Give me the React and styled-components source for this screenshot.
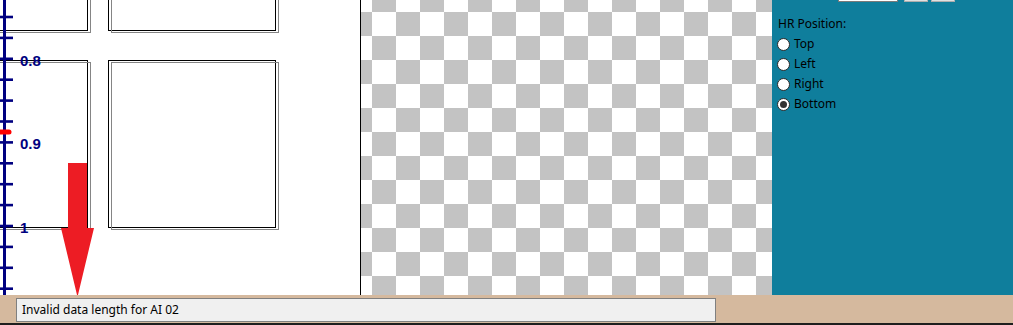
import React from "react";
import styled, { createGlobalStyle } from "styled-components";

const GlobalStyle = createGlobalStyle`
  html, body {
    margin: 0;
    padding: 0;
    overflow: hidden;
  }
  body {
    font-family: "Noto Sans", "Liberation Sans", sans-serif;
  }
`;

const Window = styled.div`
  width: 1013px;
  height: 325px;
  display: flex;
  flex-direction: column;
  overflow: hidden;
`;

const Workspace = styled.div`
  height: 295px;
  display: flex;
`;

const Preview = styled.div`
  width: 360px;
  flex: none;
  background: #ffffff;
  border-right: 1px solid #000000;
  position: relative;
  overflow: hidden;
`;

const LabelGrid = styled.div`
  display: grid;
  grid-template-columns: repeat(2, 168px);
  grid-auto-rows: 168px;
  gap: 29px 20px;
  margin: -137px 0 0 -80px;
`;

const Label = styled.div`
  box-sizing: border-box;
  border: 1px solid #000000;
  position: relative;

  &::after {
    content: "";
    position: absolute;
    box-sizing: border-box;
    top: 1px;
    left: 2px;
    width: 168px;
    height: 168px;
    border: 1px solid #858585;
  }
`;

const Overlay = styled.svg`
  position: absolute;
  top: 0;
  left: 0;
  overflow: visible;
`;

const Checker = styled.div`
  flex: 1;
  background: repeating-conic-gradient(#c3c3c3 0 25%, #ffffff 0 50%);
  background-size: 48px 48px;
  background-position: -13px -12px;
`;

const Sidebar = styled.div`
  width: 241px;
  flex: none;
  background: #0f7e9c;
  padding-left: 6px;
  box-sizing: border-box;
  display: flex;
  flex-direction: column;
  font-size: 12px;
  color: #000000;
`;

const ControlRow = styled.div`
  display: flex;
  align-items: flex-end;
  height: 22px;
  margin-top: -20px;
  padding-left: 60px;
`;

const Field = styled.div`
  width: 60px;
  height: 22px;
  box-sizing: border-box;
  background: #ffffff;
  border: 1px solid #7a7a7a;
  margin-right: ${(p) => p.$gap}px;
`;

const SmallButton = styled.div`
  width: 24px;
  height: 22px;
  box-sizing: border-box;
  background: #e1e1e1;
  border: 1px solid #adadad;
  margin-right: 3px;
`;

const GroupTitle = styled.div`
  margin-top: 14px;
  line-height: 16px;
  height: 16px;
  padding-bottom: 2px;
`;

const RadioRow = styled.label`
  display: flex;
  align-items: center;
  height: 20px;
  gap: 4px;
  line-height: 16px;
`;

const RadioDot = styled.span`
  width: 13px;
  height: 13px;
  box-sizing: border-box;
  border-radius: 50%;
  border: 1px solid #2b2b2b;
  background: #ffffff;
  display: flex;
  align-items: center;
  justify-content: center;
  margin-left: -1px;

  &::after {
    content: "";
    width: 7px;
    height: 7px;
    border-radius: 50%;
    background: ${(p) => (p.$checked ? "#333333" : "transparent")};
  }
`;

const StatusStrip = styled.div`
  height: 28px;
  background: #d5b99e;
  padding: 3px 0 0 16px;
  box-sizing: border-box;
`;

const StatusBox = styled.div`
  width: 700px;
  height: 24px;
  box-sizing: border-box;
  background: #f0f0f0;
  border: 1px solid #808080;
  padding-left: 5px;
  font-size: 12px;
  line-height: 22px;
  color: #000000;
`;

const BottomEdge = styled.div`
  height: 2px;
  background: #1e1e1e;
`;

const ticks = Array.from({ length: 14 }, (_, i) => 17 + i * 20.9);
const marks = [
  { y: 60, text: "0.8" },
  { y: 143, text: "0.9" },
  { y: 227, text: "1" },
];
const positions = ["Top", "Left", "Right", "Bottom"];

function Ruler() {
  return (
    <Overlay width="60" height="295">
      <rect x="3" y="0" width="3" height="295" fill="#000080" />
      {ticks.map((y) => (
        <rect key={y} x="0" y={y - 1.3} width="13" height="2.6" fill="#000080" />
      ))}
      <path d="M0 129.5 H9 A2.5 2.5 0 0 1 9 134.5 H0 Z" fill="#ff0000" />
      {marks.map((m) => (
        <text
          key={m.text}
          x="20"
          y={m.y + 5.5}
          fill="#000080"
          fontFamily="Liberation Sans, Arial, sans-serif"
          fontWeight="bold"
          fontSize="15"
        >
          {m.text}
        </text>
      ))}
    </Overlay>
  );
}

function Arrow() {
  return (
    <Overlay width="360" height="295">
      <path d="M68 163 H87 V228 H94 L77.5 297 L61 228 H68 Z" fill="#ed1c24" />
    </Overlay>
  );
}

export default function App() {
  return (
    <Window>
      <GlobalStyle />
      <Workspace>
        <Preview>
          <LabelGrid>
            <Label />
            <Label />
            <Label />
            <Label />
          </LabelGrid>
          <Ruler />
          <Arrow />
        </Preview>
        <Checker />
        <Sidebar>
          <ControlRow>
            <Field $gap={6} />
            <SmallButton />
            <SmallButton />
          </ControlRow>
          <GroupTitle>HR Position:</GroupTitle>
          {positions.map((p) => (
            <RadioRow key={p}>
              <RadioDot $checked={p === "Bottom"} />
              {p}
            </RadioRow>
          ))}
        </Sidebar>
      </Workspace>
      <StatusStrip>
        <StatusBox>Invalid data length for AI 02</StatusBox>
      </StatusStrip>
      <BottomEdge />
    </Window>
  );
}
